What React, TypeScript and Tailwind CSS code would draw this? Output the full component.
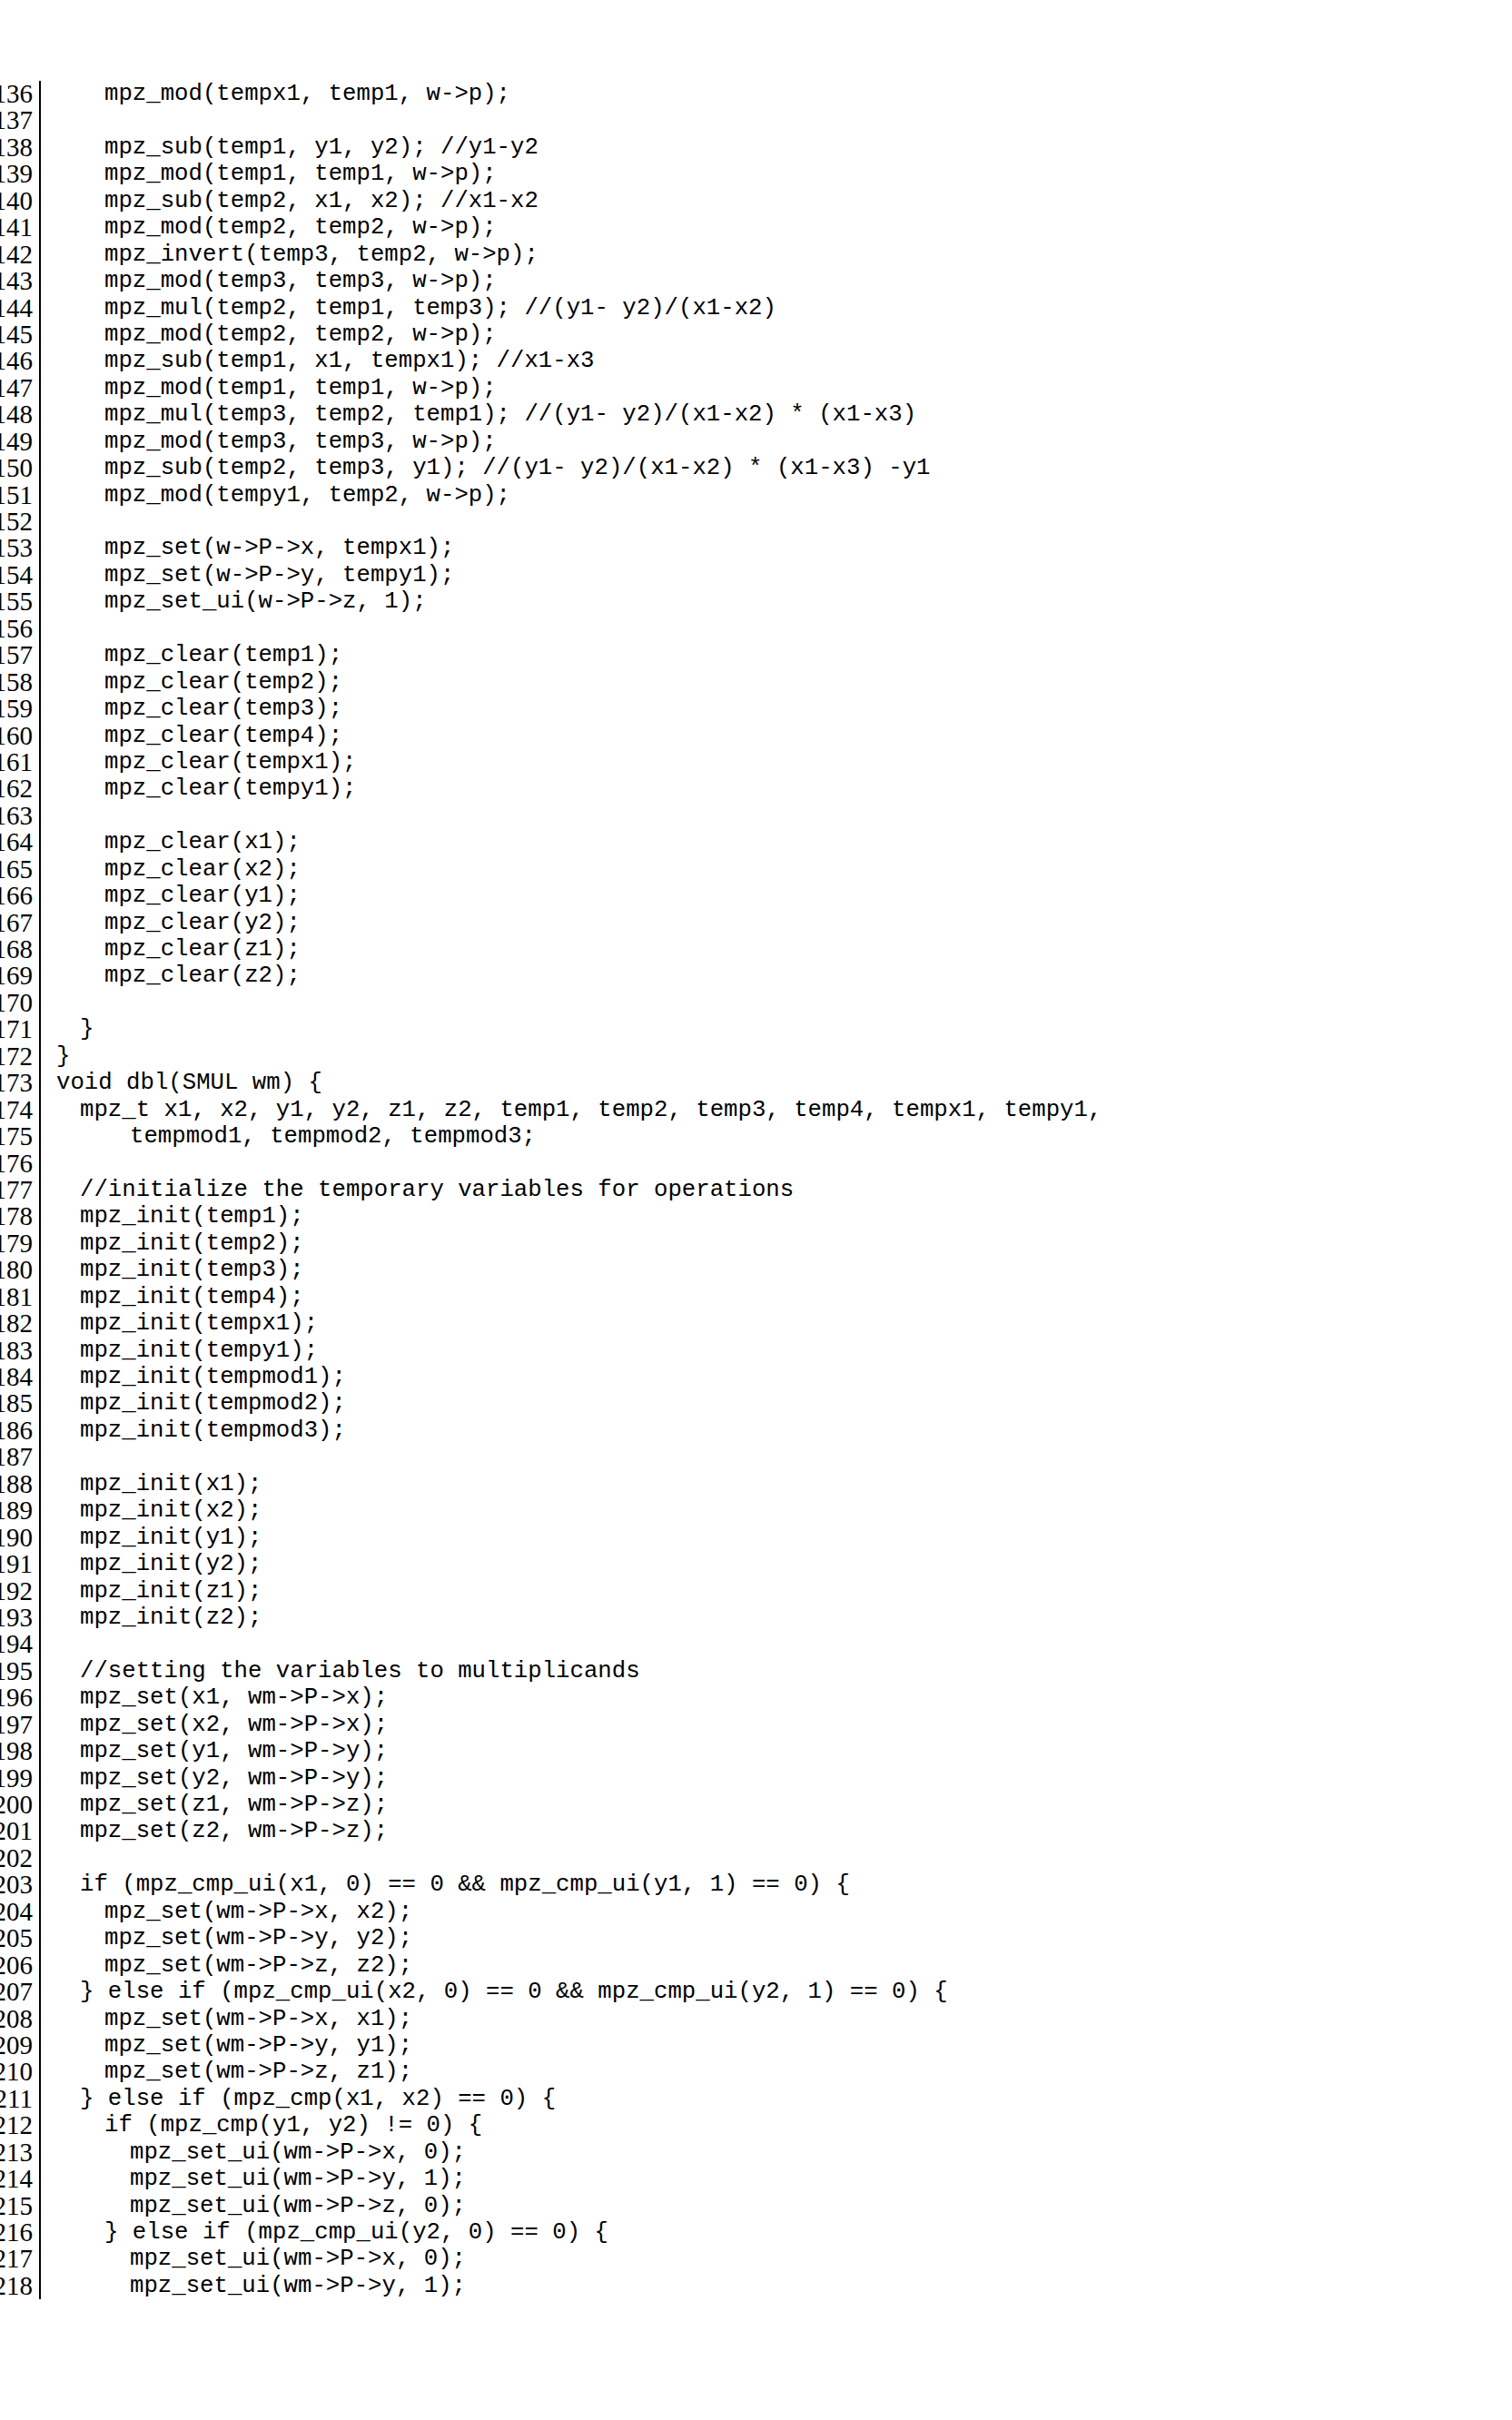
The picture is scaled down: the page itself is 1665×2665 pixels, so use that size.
import React from "react";

const RAW: string[] = [
  "    mpz_mod(tempx1, temp1, w->p);",
  "",
  "    mpz_sub(temp1, y1, y2); //y1-y2",
  "    mpz_mod(temp1, temp1, w->p);",
  "    mpz_sub(temp2, x1, x2); //x1-x2",
  "    mpz_mod(temp2, temp2, w->p);",
  "    mpz_invert(temp3, temp2, w->p);",
  "    mpz_mod(temp3, temp3, w->p);",
  "    mpz_mul(temp2, temp1, temp3); //(y1- y2)/(x1-x2)",
  "    mpz_mod(temp2, temp2, w->p);",
  "    mpz_sub(temp1, x1, tempx1); //x1-x3",
  "    mpz_mod(temp1, temp1, w->p);",
  "    mpz_mul(temp3, temp2, temp1); //(y1- y2)/(x1-x2) * (x1-x3)",
  "    mpz_mod(temp3, temp3, w->p);",
  "    mpz_sub(temp2, temp3, y1); //(y1- y2)/(x1-x2) * (x1-x3) -y1",
  "    mpz_mod(tempy1, temp2, w->p);",
  "",
  "    mpz_set(w->P->x, tempx1);",
  "    mpz_set(w->P->y, tempy1);",
  "    mpz_set_ui(w->P->z, 1);",
  "",
  "    mpz_clear(temp1);",
  "    mpz_clear(temp2);",
  "    mpz_clear(temp3);",
  "    mpz_clear(temp4);",
  "    mpz_clear(tempx1);",
  "    mpz_clear(tempy1);",
  "",
  "    mpz_clear(x1);",
  "    mpz_clear(x2);",
  "    mpz_clear(y1);",
  "    mpz_clear(y2);",
  "    mpz_clear(z1);",
  "    mpz_clear(z2);",
  "",
  "  }",
  "}",
  "void dbl(SMUL wm) {",
  "  mpz_t x1, x2, y1, y2, z1, z2, temp1, temp2, temp3, temp4, tempx1, tempy1,",
  "      tempmod1, tempmod2, tempmod3;",
  "",
  "  //initialize the temporary variables for operations",
  "  mpz_init(temp1);",
  "  mpz_init(temp2);",
  "  mpz_init(temp3);",
  "  mpz_init(temp4);",
  "  mpz_init(tempx1);",
  "  mpz_init(tempy1);",
  "  mpz_init(tempmod1);",
  "  mpz_init(tempmod2);",
  "  mpz_init(tempmod3);",
  "",
  "  mpz_init(x1);",
  "  mpz_init(x2);",
  "  mpz_init(y1);",
  "  mpz_init(y2);",
  "  mpz_init(z1);",
  "  mpz_init(z2);",
  "",
  "  //setting the variables to multiplicands",
  "  mpz_set(x1, wm->P->x);",
  "  mpz_set(x2, wm->P->x);",
  "  mpz_set(y1, wm->P->y);",
  "  mpz_set(y2, wm->P->y);",
  "  mpz_set(z1, wm->P->z);",
  "  mpz_set(z2, wm->P->z);",
  "",
  "  if (mpz_cmp_ui(x1, 0) == 0 && mpz_cmp_ui(y1, 1) == 0) {",
  "    mpz_set(wm->P->x, x2);",
  "    mpz_set(wm->P->y, y2);",
  "    mpz_set(wm->P->z, z2);",
  "  } else if (mpz_cmp_ui(x2, 0) == 0 && mpz_cmp_ui(y2, 1) == 0) {",
  "    mpz_set(wm->P->x, x1);",
  "    mpz_set(wm->P->y, y1);",
  "    mpz_set(wm->P->z, z1);",
  "  } else if (mpz_cmp(x1, x2) == 0) {",
  "    if (mpz_cmp(y1, y2) != 0) {",
  "      mpz_set_ui(wm->P->x, 0);",
  "      mpz_set_ui(wm->P->y, 1);",
  "      mpz_set_ui(wm->P->z, 0);",
  "    } else if (mpz_cmp_ui(y2, 0) == 0) {",
  "      mpz_set_ui(wm->P->x, 0);",
  "      mpz_set_ui(wm->P->y, 1);",
];

const INDENT: Record<number, string> = {
  0: "pl-0",
  2: "pl-[26px]",
  4: "pl-[53px]",
  6: "pl-[81px]",
};

const LINES = RAW.map((s) => {
  const m = s.match(/^ */);
  const n = m ? m[0].length : 0;
  return { indent: n, text: s.slice(n) };
});

export default function App() {
  return (
    <div className="w-[1665px] h-[2665px] bg-white text-black overflow-hidden">
      <div className="flex pt-[89px]">
        <div className="w-[36px] shrink-0 font-['Liberation_Serif',serif] text-[29px] leading-[29.45px]">
          {LINES.map((_, i) => (
            <div key={i} className="flex justify-end h-[29.45px] whitespace-nowrap">
              {136 + i}
            </div>
          ))}
        </div>
        <div className="w-[7px] shrink-0" />
        <div className="w-[2px] shrink-0 bg-black" />
        <div className="pl-[17px] font-['Liberation_Mono',monospace] text-[25.7px] leading-[29.45px]">
          {LINES.map((l, i) => (
            <div key={i} className={`h-[29.45px] whitespace-pre ${INDENT[l.indent] ?? "pl-0"}`}>
              {l.text}
            </div>
          ))}
        </div>
      </div>
    </div>
  );
}
